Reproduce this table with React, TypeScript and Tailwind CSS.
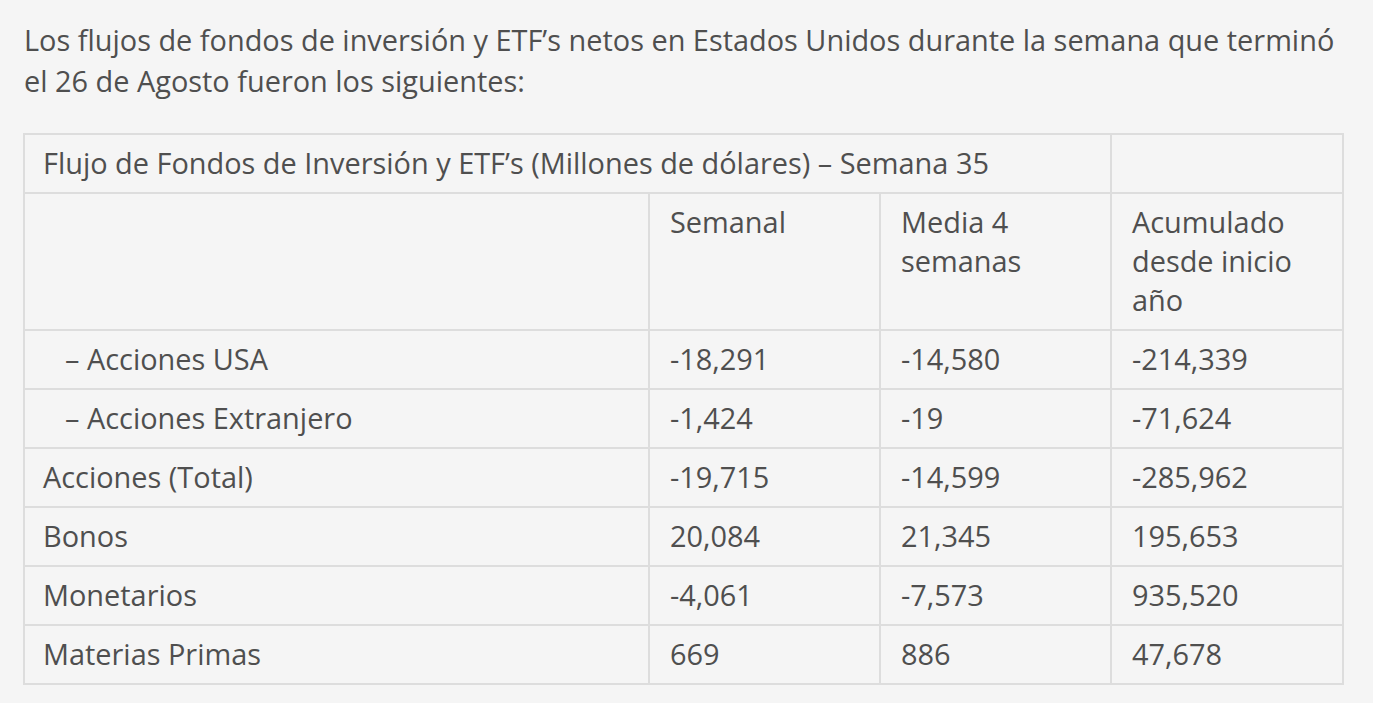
import React from 'react';

const rows: { label: string; indent?: boolean; values: string[] }[] = [
  { label: '– Acciones USA', indent: true, values: ['-18,291', '-14,580', '-214,339'] },
  { label: '– Acciones Extranjero', indent: true, values: ['-1,424', '-19', '-71,624'] },
  { label: 'Acciones (Total)', values: ['-19,715', '-14,599', '-285,962'] },
  { label: 'Bonos', values: ['20,084', '21,345', '195,653'] },
  { label: 'Monetarios', values: ['-4,061', '-7,573', '935,520'] },
  { label: 'Materias Primas', values: ['669', '886', '47,678'] },
];

export default function App() {
  return (
    <div className="min-h-[703px] bg-[#f5f5f5] text-[#4f4f4f] font-['Open_Sans',sans-serif] text-[28.9px] px-[24px] pt-[19px]">
      <p className="leading-[41px] w-[1320px]">
        Los flujos de fondos de inversión y ETF’s netos en Estados Unidos durante la semana que terminó el 26 de Agosto fueron los siguientes:
      </p>

      <table className="mt-[32px] ml-[-1px] border-collapse table-fixed w-[1319px] leading-[39px]">
        <colgroup>
          <col className="w-[625px]" />
          <col className="w-[231px]" />
          <col className="w-[231px]" />
          <col className="w-[232px]" />
        </colgroup>
        <tbody>
          <tr>
            <td colSpan={3} className="border-2 border-[#dddddd] pl-[18px] pr-[20px] pt-[8px] pb-[10px] whitespace-nowrap">
              Flujo de Fondos de Inversión y ETF’s (Millones de dólares) – Semana 35
            </td>
            <td className="border-2 border-[#dddddd]"></td>
          </tr>
          <tr>
            <td className="border-2 border-[#dddddd] px-[20px] pt-[8px] pb-[10px]"></td>
            <td className="border-2 border-[#dddddd] px-[20px] pt-[8px] pb-[10px] align-top">Semanal</td>
            <td className="border-2 border-[#dddddd] px-[20px] pt-[8px] pb-[10px] align-top">Media 4 semanas</td>
            <td className="border-2 border-[#dddddd] px-[20px] pt-[8px] pb-[10px] align-top">Acumulado desde inicio año</td>
          </tr>
          {rows.map((r) => (
            <tr key={r.label}>
              <td className={`border-2 border-[#dddddd] pt-[8px] pb-[10px] pr-[20px] ${r.indent ? 'pl-[40px]' : 'pl-[18px]'}`}>
                {r.label}
              </td>
              {r.values.map((v, i) => (
                <td key={i} className="border-2 border-[#dddddd] px-[20px] pt-[8px] pb-[10px]">
                  {v}
                </td>
              ))}
            </tr>
          ))}
        </tbody>
      </table>
    </div>
  );
}
